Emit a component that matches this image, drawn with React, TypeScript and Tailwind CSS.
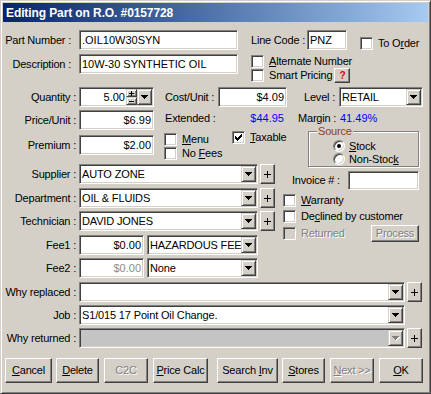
import React, { FC, ReactNode } from "react";

// classic win2000 bevels
const sunken =
	"border border-t-[#808080] border-l-[#808080] border-r-white border-b-white shadow-[inset_1px_1px_0_#404040,inset_-1px_-1px_0_#d4d0c8]";
const raised =
	"border border-t-white border-l-white border-r-[#404040] border-b-[#404040] shadow-[inset_-1px_-1px_0_#808080] bg-[#d4d0c8]";
const comboBtn =
	"border border-t-[#d4d0c8] border-l-[#d4d0c8] border-r-[#404040] border-b-[#404040] shadow-[inset_1px_1px_0_#fff,inset_-1px_-1px_0_#808080] bg-[#d4d0c8]";
const etched = "text-[#808080] [text-shadow:1px_1px_0_#fff]";

const U: FC<{ children: ReactNode }> = ({ children }) => (
	<span className="underline underline-offset-[1px]">{children}</span>
);

const Arrow: FC<{ disabled?: boolean }> = ({ disabled = false }) => (
	<svg width="8" height="5" viewBox="0 0 8 5">
		{disabled && (
			<path d="M1 1h7v1H1zM2 2h5v1H2zM3 3h3v1H3zM4 4h1v1H4z" fill="#fff" />
		)}
		<path
			d="M0 0h7v1H0zM1 1h5v1H1zM2 2h3v1H2zM3 3h1v1H3z"
			fill={disabled ? "#808080" : "#000"}
		/>
	</svg>
);

const Check: FC<{ checked?: boolean; disabled?: boolean }> = ({
	checked = false,
	disabled = false,
}) => (
	<div
		className={`w-[13px] h-[13px] shrink-0 flex items-center justify-center ${sunken} ${
			disabled ? "bg-[#d4d0c8]" : "bg-white"
		}`}
	>
		{checked && (
			<svg width="7" height="7" viewBox="0 0 7 7">
				<path
					d="M0 2h1v3H0zM1 3h1v3H1zM2 4h1v3H2zM3 3h1v3H3zM4 2h1v3H4zM5 1h1v3H5zM6 0h1v3H6z"
					fill="#000"
				/>
			</svg>
		)}
	</div>
);

const CheckRow: FC<{
	label: ReactNode;
	checked?: boolean;
	disabled?: boolean;
	className?: string;
}> = ({ label, checked, disabled, className = "" }) => (
	<div className={`flex items-center h-[13px] ${className}`}>
		<Check checked={checked} disabled={disabled} />
		<span className={`ml-[5px] whitespace-nowrap ${disabled ? etched : ""}`}>
			{label}
		</span>
	</div>
);

const Radio: FC<{ label: ReactNode; on?: boolean; className?: string }> = ({
	label,
	on = false,
	className = "",
}) => (
	<div className={`flex items-center h-3 ${className}`}>
		<div
			className={`w-3 h-3 rounded-full bg-white flex items-center justify-center ${sunken}`}
		>
			{on && <div className="w-1 h-1 rounded-full bg-black" />}
		</div>
		<span className="ml-1 whitespace-nowrap">{label}</span>
	</div>
);

const Edit: FC<{
	children?: ReactNode;
	className?: string;
	right?: boolean;
	gray?: boolean;
}> = ({ children, className = "", right = false, gray = false }) => (
	<div
		className={`${sunken} bg-white h-5 shrink-0 flex items-center px-[2px] whitespace-nowrap overflow-hidden tracking-normal ${
			right ? "justify-end" : ""
		} ${gray ? "text-[#8c8c8c]" : ""} ${className}`}
	>
		{children}
	</div>
);

const Combo: FC<{ text?: string; className?: string; disabled?: boolean }> = ({
	text = "",
	className = "",
	disabled = false,
}) => (
	<div
		className={`${sunken} ${
			disabled ? "bg-[#c4c4c4]" : "bg-white"
		} h-5 shrink-0 flex p-px tracking-[-0.15px] ${className}`}
	>
		<div className="flex-1 min-w-0 flex items-center pl-px whitespace-nowrap overflow-hidden">
			{text}
		</div>
		<div className={`${comboBtn} w-[15px] flex items-center justify-center`}>
			<Arrow disabled={disabled} />
		</div>
	</div>
);

const Plus: FC<{ className?: string }> = ({ className = "" }) => (
	<div
		className={`${raised} w-[15px] h-5 shrink-0 flex items-center justify-center ${className}`}
	>
		<svg width="7" height="7" viewBox="0 0 7 7">
			<path d="M3 0h1v7H3zM0 3h7v1H0z" fill="#000" />
		</svg>
	</div>
);

const Btn: FC<{ children: ReactNode; className?: string; disabled?: boolean }> = ({
	children,
	className = "",
	disabled = false,
}) => (
	<div
		className={`${raised} h-[25px] shrink-0 flex items-center justify-center whitespace-nowrap ${
			disabled ? etched : ""
		} ${className}`}
	>
		<span>{children}</span>
	</div>
);

const FieldRow: FC<{
	label: string;
	children: ReactNode;
	className?: string;
	labelClass?: string;
}> = ({ label, children, className = "", labelClass = "" }) => (
	<div className={`flex items-center h-5 ${className}`}>
		<div className={`w-[73px] shrink-0 text-right whitespace-nowrap ${labelClass}`}>
			{label}
		</div>
		<div className="ml-[3px] flex items-center">{children}</div>
	</div>
);

const QtyBox: FC = () => (
	<div className={`${sunken} bg-white h-5 w-[75px] shrink-0 flex p-px tracking-normal`}>
		<div className="flex-1 flex items-center justify-end pr-px">5.00</div>
		<div className="w-[11px] flex flex-col">
			<div className={`${comboBtn} flex-1 flex items-center justify-center`}>
				<svg width="5" height="5" viewBox="0 0 5 5">
					<path d="M2 0h1v5H2zM0 2h5v1H0z" fill="#000" />
				</svg>
			</div>
			<div className={`${comboBtn} flex-1 flex items-center justify-center`}>
				<svg width="5" height="1" viewBox="0 0 5 1">
					<path d="M0 0h5v1H0z" fill="#000" />
				</svg>
			</div>
		</div>
		<div className={`${comboBtn} w-[15px] flex items-center justify-center`}>
			<Arrow />
		</div>
	</div>
);

const App: FC = () => {
	return (
		<div className="w-[431px] h-[394px] bg-[#d4d0c8] border border-t-[#d4d0c8] border-l-[#d4d0c8] border-r-[#404040] border-b-[#404040] shadow-[inset_1px_1px_0_#fff,inset_-1px_-1px_0_#808080] p-[2px] font-['Liberation_Sans',Arial,sans-serif] text-[11px] text-black leading-none tracking-[-0.2px] select-none">
			<div className="h-[19px] bg-linear-to-r from-[#0a246a] to-[#a6caf0] flex items-center pl-[3px] text-white font-bold text-[12px] tracking-[-0.1px]">
				Editing Part on R.O. #0157728
			</div>

			<div className="h-[369px] flex flex-col">
				{/* part number / description */}
				<div className="flex">
					<div className="w-[235px] shrink-0 pt-[8px] flex flex-col gap-[4px]">
						<FieldRow label="Part Number :" labelClass="pr-[5px]">
							<Edit className="w-[159px]">.OIL10W30SYN</Edit>
						</FieldRow>
						<FieldRow label="Description :" labelClass="pr-[5px]">
							<Edit className="w-[159px]">10W-30 SYNTHETIC OIL</Edit>
						</FieldRow>
					</div>
					<div className="ml-[13px] pt-[8px] flex flex-col">
						<div className="flex h-5">
							<div className="w-[56px] flex items-center whitespace-nowrap">
								Line Code :
							</div>
							<Edit className="w-[40px]">PNZ</Edit>
							<CheckRow
								className="self-end ml-[13px]"
								label={
									<>
										To O<U>r</U>der
									</>
								}
							/>
						</div>
						<CheckRow
							className="mt-[5px]"
							label={
								<>
									<U>A</U>lternate Number
								</>
							}
						/>
						<div className="flex items-center h-[15px]">
							<Check />
							<span className="ml-[5px] whitespace-nowrap">Smart Pricing</span>
							<div
								className={`${raised} ml-[2px] w-4 h-[15px] flex items-center justify-center text-[#e00000] font-bold text-[10px]`}
							>
								?
							</div>
						</div>
					</div>
				</div>

				{/* middle area */}
				<div className="flex mt-[4px]">
					<div className="w-[280px] shrink-0 flex flex-col">
						<div className="h-[77px] flex">
							<div className="w-[151px] shrink-0 flex flex-col">
								<FieldRow label="Quantity :">
									<QtyBox />
								</FieldRow>
								<FieldRow label="Price/Unit :" className="mt-[3px]">
									<Edit right className="w-[75px]">
										$6.99
									</Edit>
								</FieldRow>
								<FieldRow label="Premium :" className="mt-[5px]">
									<Edit right className="w-[75px]">
										$2.00
									</Edit>
								</FieldRow>
							</div>
							<div className="ml-[10px] w-[123px] shrink-0 flex flex-col">
								<div className="h-5 flex items-center justify-between">
									<span className="pl-px">Cost/Unit :</span>
									<Edit right className="w-[69px]">
										$4.09
									</Edit>
								</div>
								<div className="mt-[4px] h-[14px] flex items-center justify-between">
									<span className="pl-px">Extended :</span>
									<span className="pr-[3px] text-[#0000ff] tracking-normal">
										$44.95
									</span>
								</div>
								<div className="mt-[6px] flex">
									<div className="w-[68px] shrink-0 flex flex-col">
										<CheckRow
											className="mt-[2px]"
											label={
												<>
													<U>M</U>enu
												</>
											}
										/>
										<CheckRow
											className="mt-px"
											label={
												<>
													No <U>F</U>ees
												</>
											}
										/>
									</div>
									<CheckRow
										checked
										label={
											<>
												<U>T</U>axable
											</>
										}
									/>
								</div>
							</div>
						</div>
						<FieldRow label="Supplier :">
							<Combo text="AUTO ZONE" className="w-[179px]" />
							<Plus className="ml-[2px]" />
						</FieldRow>
						<FieldRow label="Department :" className="mt-[4px]">
							<Combo text="OIL & FLUIDS" className="w-[179px]" />
							<Plus className="ml-[2px]" />
						</FieldRow>
						<FieldRow label="Technician :" className="mt-[3px]">
							<Combo text="DAVID JONES" className="w-[179px]" />
							<Plus className="ml-[2px]" />
						</FieldRow>
						<FieldRow label="Fee1 :" className="mt-[4px]">
							<Edit right className="w-[65px]">
								$0.00
							</Edit>
							<Combo text="HAZARDOUS FEE" className="ml-[3px] w-[111px]" />
						</FieldRow>
						<FieldRow label="Fee2 :" className="mt-[3px]">
							<Edit right gray className="w-[65px]">
								$0.00
							</Edit>
							<Combo text="None" className="ml-[3px] w-[111px]" />
						</FieldRow>
					</div>

					<div className="flex-1 flex flex-col">
						<div className="h-5 flex items-center pl-[21px]">
							<span className="w-[35px] shrink-0">Level :</span>
							<Combo text="RETAIL" className="w-[84px]" />
						</div>
						<div className="mt-[4px] h-[14px] flex items-center pl-[15px]">
							<span className="w-[42px] shrink-0">Margin :</span>
							<span className="text-[#0000ff] tracking-normal">41.49%</span>
						</div>
						<div className="relative mt-[6px] ml-[25px] w-[111px] h-[36px] border border-[#808080] shadow-[inset_1px_1px_0_#fff,1px_1px_0_#fff]">
							<span className="absolute -top-[6px] left-[8px] px-px bg-[#d4d0c8] text-[#8a4510] leading-none">
								Source
							</span>
							<Radio
								on
								className="mt-[8px] ml-[24px]"
								label={
									<>
										<U>S</U>tock
									</>
								}
							/>
							<Radio
								className="mt-px ml-[24px]"
								label={
									<>
										Non-Stoc<U>k</U>
									</>
								}
							/>
						</div>
						<div className="mt-[4px] h-[19px] flex items-center pl-[9px]">
							<span className="w-[56px] shrink-0 whitespace-nowrap">Invoice # :</span>
							<Edit className="w-[71px] h-[19px]" />
						</div>
						<CheckRow
							className="mt-[4px]"
							label={
								<>
									<U>W</U>arranty
								</>
							}
						/>
						<CheckRow
							className="mt-[3px]"
							label={
								<>
									De<U>c</U>lined by customer
								</>
							}
						/>
						<div className="mt-[2px] h-[17px] flex items-center">
							<CheckRow disabled label="Returned" />
							<div
								className={`${raised} ${etched} ml-auto mr-[9px] w-[48px] h-[17px] flex items-center justify-center`}
							>
								Process
							</div>
						</div>
					</div>
				</div>

				{/* why / job */}
				<FieldRow label="Why replaced :" className="mt-[4px]">
					<Combo className="w-[326px]" />
					<Plus className="ml-[2px]" />
				</FieldRow>
				<FieldRow label="Job :" className="mt-[3px]">
					<Combo text="S1/015 17 Point Oil Change." className="w-[326px]" />
				</FieldRow>
				<FieldRow label="Why returned :" className="mt-[3px]">
					<Combo disabled className="w-[326px]" />
					<Plus className="ml-[2px]" />
				</FieldRow>

				{/* buttons */}
				<div className="mt-[10px] flex">
					<Btn className="ml-[2px] w-[47px]">
						<U>C</U>ancel
					</Btn>
					<Btn className="ml-[4px] w-[43px]">
						<U>D</U>elete
					</Btn>
					<Btn disabled className="ml-[5px] w-[44px]">
						C2C
					</Btn>
					<Btn className="ml-[5px] w-[55px]">
						<U>P</U>rice Calc
					</Btn>
					<Btn className="ml-[9px] w-[61px]">
						Search <U>I</U>nv
					</Btn>
					<Btn className="ml-[4px] w-[43px]">
						<U>S</U>tores
					</Btn>
					<Btn disabled className="ml-[5px] w-[44px]">
						<U>N</U>ext &gt;&gt;
					</Btn>
					<Btn className="ml-[5px] w-[44px]">
						<U>O</U>K
					</Btn>
				</div>
			</div>
		</div>
	);
};

export default App;
